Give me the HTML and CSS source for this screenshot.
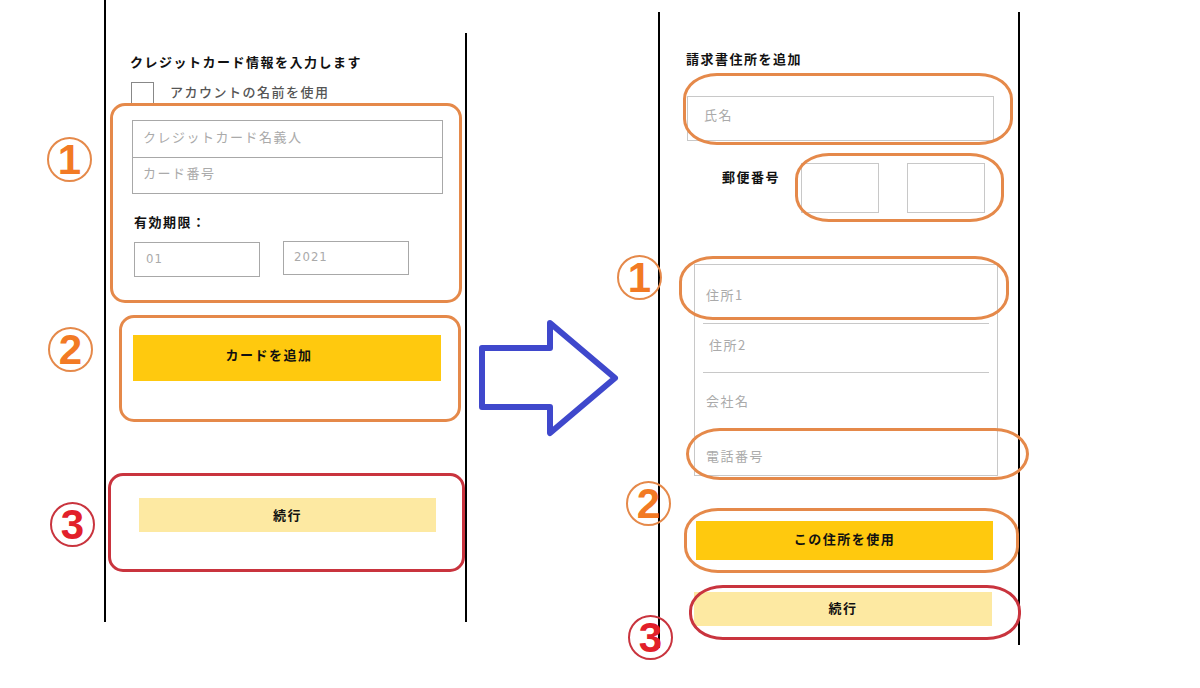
FILE: index.html
```html
<!DOCTYPE html>
<html lang="ja">
<head>
  <meta charset="UTF-8">
  <title>支払い画面の変更案</title>
  <link rel="stylesheet" href="styles.css">
</head>
<body>
  <div class="stage">
    <!-- Before: card entry -->
    <div class="panel panel-card">
      <div class="title">クレジットカード情報を入力します</div>
      <label class="check-row">
        <span class="checkbox"></span>
        <span class="check-label">アカウントの名前を使用</span>
      </label>
      <div class="field-group card-group">
        <div class="field-row row-holder">クレジットカード名義人</div>
        <div class="field-row row-number">カード番号</div>
      </div>
      <div class="label expiry-label">有効期限：</div>
      <div class="expiry-row">
        <div class="box-input expiry-month">01</div>
        <div class="box-input expiry-year">2021</div>
      </div>
      <button class="btn btn-primary btn-add-card">カードを追加</button>
      <button class="btn btn-soft btn-continue-left">続行</button>
    </div>

    <!-- Arrow -->
    <svg class="arrow" width="142" height="120" viewBox="0 0 142 120">
      <path d="M4 30 H72 V5 L137 60 L72 115 V89 H4 Z" fill="none" stroke="#3F48CC" stroke-width="6" stroke-linejoin="round"/>
    </svg>

    <!-- After: billing address -->
    <div class="panel panel-address">
      <div class="title">請求書住所を追加</div>
      <div class="box-input name-input">氏名</div>
      <div class="postal-row">
        <div class="label postal-label">郵便番号</div>
        <div class="postal-box"></div>
        <div class="postal-box"></div>
      </div>
      <div class="field-group address-group">
        <div class="field-row row-addr1">住所1</div>
        <div class="field-row row-addr2">住所2</div>
        <div class="field-row row-company">会社名</div>
        <div class="field-row row-phone">電話番号</div>
      </div>
      <button class="btn btn-primary btn-use-address">この住所を使用</button>
      <button class="btn btn-soft btn-continue-right">続行</button>
    </div>

    <!-- Annotations -->
    <div class="ring ring-orange" style="left:110px;top:103px;width:352px;height:200px"></div>
    <div class="ring ring-orange" style="left:119px;top:315px;width:342px;height:107px"></div>
    <div class="ring ring-red" style="left:108px;top:473px;width:357px;height:99px"></div>

    <div class="ring ring-orange oval" style="left:683px;top:73px;width:330px;height:72px"></div>
    <div class="ring ring-orange oval" style="left:795px;top:153px;width:209px;height:69px"></div>
    <div class="ring ring-orange oval" style="left:679px;top:256px;width:330px;height:64px"></div>
    <div class="ring ring-orange oval" style="left:686px;top:428px;width:343px;height:52px"></div>
    <div class="ring ring-orange oval" style="left:684px;top:508px;width:335px;height:65px"></div>
    <div class="ring ring-red oval" style="left:689px;top:585px;width:332px;height:55px"></div>

    <div class="badge badge-orange" style="left:47px;top:137px">1</div>
    <div class="badge badge-orange" style="left:48px;top:327px">2</div>
    <div class="badge badge-red" style="left:50px;top:502px">3</div>

    <div class="badge badge-orange" style="left:617px;top:255px">1</div>
    <div class="badge badge-orange" style="left:626px;top:481px">2</div>
    <div class="badge badge-red" style="left:628px;top:615px">3</div>
  </div>
</body>
</html>
```

FILE: styles.css
```css
/* =====================
   Variables
   ===================== */
:root {
  --ink: #111;
  --muted: #555;
  --placeholder: #aaa;
  --field-border: #a8a8a8;
  --field-border-light: #c8c8c8;
  --gold: #FFC90E;
  --gold-soft: #FDE9A2;
  --note-orange: #E5894A;
  --note-orange-digit: #F27A24;
  --note-red: #C9343E;
  --note-red-digit: #E2202A;
  --arrow: #3F48CC;
}

/* =====================
   Global
   ===================== */
* {
  box-sizing: border-box;
}

body {
  margin: 0;
  background: #fff;
  color: var(--ink);
  font-family: "Noto Sans CJK JP", "Noto Sans", sans-serif;
  font-size: 13px;
  letter-spacing: 1.5px;
  line-height: 16px;
}

.stage {
  position: relative;
  width: 1200px;
  height: 688px;
  display: flex;
  align-items: flex-start;
  overflow: hidden;
}

/* =====================
   Panels
   ===================== */
.panel {
  position: relative;
  display: flex;
  flex-direction: column;
  align-items: flex-start;
  border-left: 2px solid #000;
}

.panel::after {
  content: "";
  position: absolute;
  right: 0;
  bottom: 0;
  width: 2px;
  background: #000;
}

.panel-card {
  margin-left: 104px;
  width: 363px;
  height: 622px;
  padding: 54px 0 0 24px;
}

.panel-card::after {
  top: 33px;
}

.panel-address {
  margin-top: 12px;
  margin-left: 38px;
  width: 362px;
  height: 636px;
  padding: 39px 0 0 26px;
}

.panel-address::after {
  top: 0;
  bottom: 3px;
}

.title {
  font-weight: 700;
}

.label {
  font-weight: 700;
  white-space: nowrap;
}

/* =====================
   Fields
   ===================== */
.check-row {
  display: flex;
  align-items: flex-start;
  gap: 16px;
  margin-top: 12px;
  margin-left: 1px;
}

.checkbox {
  width: 23px;
  height: 23px;
  border: 1px solid #888;
}

.check-label {
  margin-top: 2px;
  color: var(--muted);
  font-weight: 500;
}

.field-group {
  border: 1px solid var(--field-border);
  display: flex;
  flex-direction: column;
}

.field-row {
  display: flex;
  align-items: center;
  color: var(--placeholder);
}

.card-group {
  margin-top: 15px;
  margin-left: 2px;
  width: 311px;
}

.card-group .field-row {
  padding-left: 10px;
  padding-bottom: 5px;
}

.row-holder {
  height: 37px;
  border-bottom: 1px solid var(--field-border);
}

.row-number {
  height: 35px;
}

.expiry-label {
  margin-top: 20px;
  margin-left: 4px;
}

.expiry-row {
  display: flex;
  gap: 23px;
  margin-top: 11px;
  margin-left: 4px;
  align-items: flex-start;
}

.box-input {
  display: flex;
  align-items: center;
  border: 1px solid var(--field-border);
  color: var(--placeholder);
}

.expiry-month,
.expiry-year {
  width: 126px;
  font-family: "Liberation Sans Narrow", "DejaVu Sans Condensed", sans-serif;
  letter-spacing: 1px;
  padding-bottom: 2px;
}

.expiry-month {
  height: 35px;
  margin-top: 1px;
  padding-left: 11px;
}

.expiry-year {
  height: 34px;
  padding-left: 10px;
}

.name-input {
  margin-top: 29px;
  margin-left: 1px;
  width: 307px;
  height: 45px;
  padding-left: 16px;
  padding-bottom: 7px;
  border-color: var(--field-border-light);
}

.postal-row {
  display: flex;
  align-items: flex-start;
  margin-top: 22px;
  margin-left: 36px;
}

.postal-label {
  margin-top: 6px;
  width: 58px;
  flex-shrink: 0;
}

.postal-box {
  width: 78px;
  height: 50px;
  border: 1px solid var(--field-border-light);
  margin-left: 21px;
}

.postal-box + .postal-box {
  margin-left: 28px;
}

.address-group {
  margin-top: 51px;
  margin-left: 8px;
  width: 304px;
  height: 212px;
  border-color: var(--field-border-light);
}

.address-group .field-row {
  margin: 0 8px;
  padding-left: 3px;
}

.row-addr1 {
  height: 59px;
  padding-top: 2px;
  border-bottom: 1px solid var(--field-border-light);
}

.row-addr2 {
  height: 49px;
  padding-bottom: 6px;
  border-bottom: 1px solid var(--field-border-light);
}

.address-group .row-addr2 {
  padding-left: 6px;
}

.row-company {
  height: 56px;
}

.row-phone {
  height: 46px;
  padding-top: 7px;
}

/* =====================
   Buttons
   ===================== */
.btn {
  border: none;
  padding: 0;
  font-family: inherit;
  font-size: 13px;
  letter-spacing: 1.5px;
  font-weight: 700;
  color: var(--ink);
  cursor: pointer;
}

.btn-primary {
  background: var(--gold);
}

.btn-soft {
  background: var(--gold-soft);
}

.btn-add-card {
  margin-top: 58px;
  margin-left: 3px;
  width: 308px;
  height: 46px;
  padding-right: 36px;
  padding-bottom: 8px;
}

.btn-continue-left {
  margin-top: 117px;
  margin-left: 9px;
  width: 297px;
  height: 34px;
  padding-bottom: 2px;
}

.btn-use-address {
  margin-top: 45px;
  margin-left: 10px;
  width: 297px;
  height: 39px;
  padding-bottom: 5px;
}

.btn-continue-right {
  margin-top: 32px;
  margin-left: 8px;
  width: 298px;
  height: 34px;
  padding-bottom: 3px;
}

/* =====================
   Arrow
   ===================== */
.arrow {
  margin-top: 318px;
  margin-left: 11px;
  flex-shrink: 0;
}

/* =====================
   Annotations
   ===================== */
.ring {
  position: absolute;
  border: 3px solid var(--note-orange);
  border-radius: 15px;
}

.ring.oval {
  border-radius: 34px / 26px;
}

.ring-red {
  border-color: var(--note-red);
}

.badge {
  position: absolute;
  width: 45px;
  height: 45px;
  border: 2px solid var(--note-orange);
  border-radius: 50%;
  display: flex;
  align-items: center;
  justify-content: center;
  font-family: "Liberation Sans", Arial, sans-serif;
  font-weight: 700;
  font-size: 42px;
  letter-spacing: 0;
  line-height: 1;
  color: var(--note-orange-digit);
}

.badge-red {
  border-color: var(--note-red);
  color: var(--note-red-digit);
}
```
